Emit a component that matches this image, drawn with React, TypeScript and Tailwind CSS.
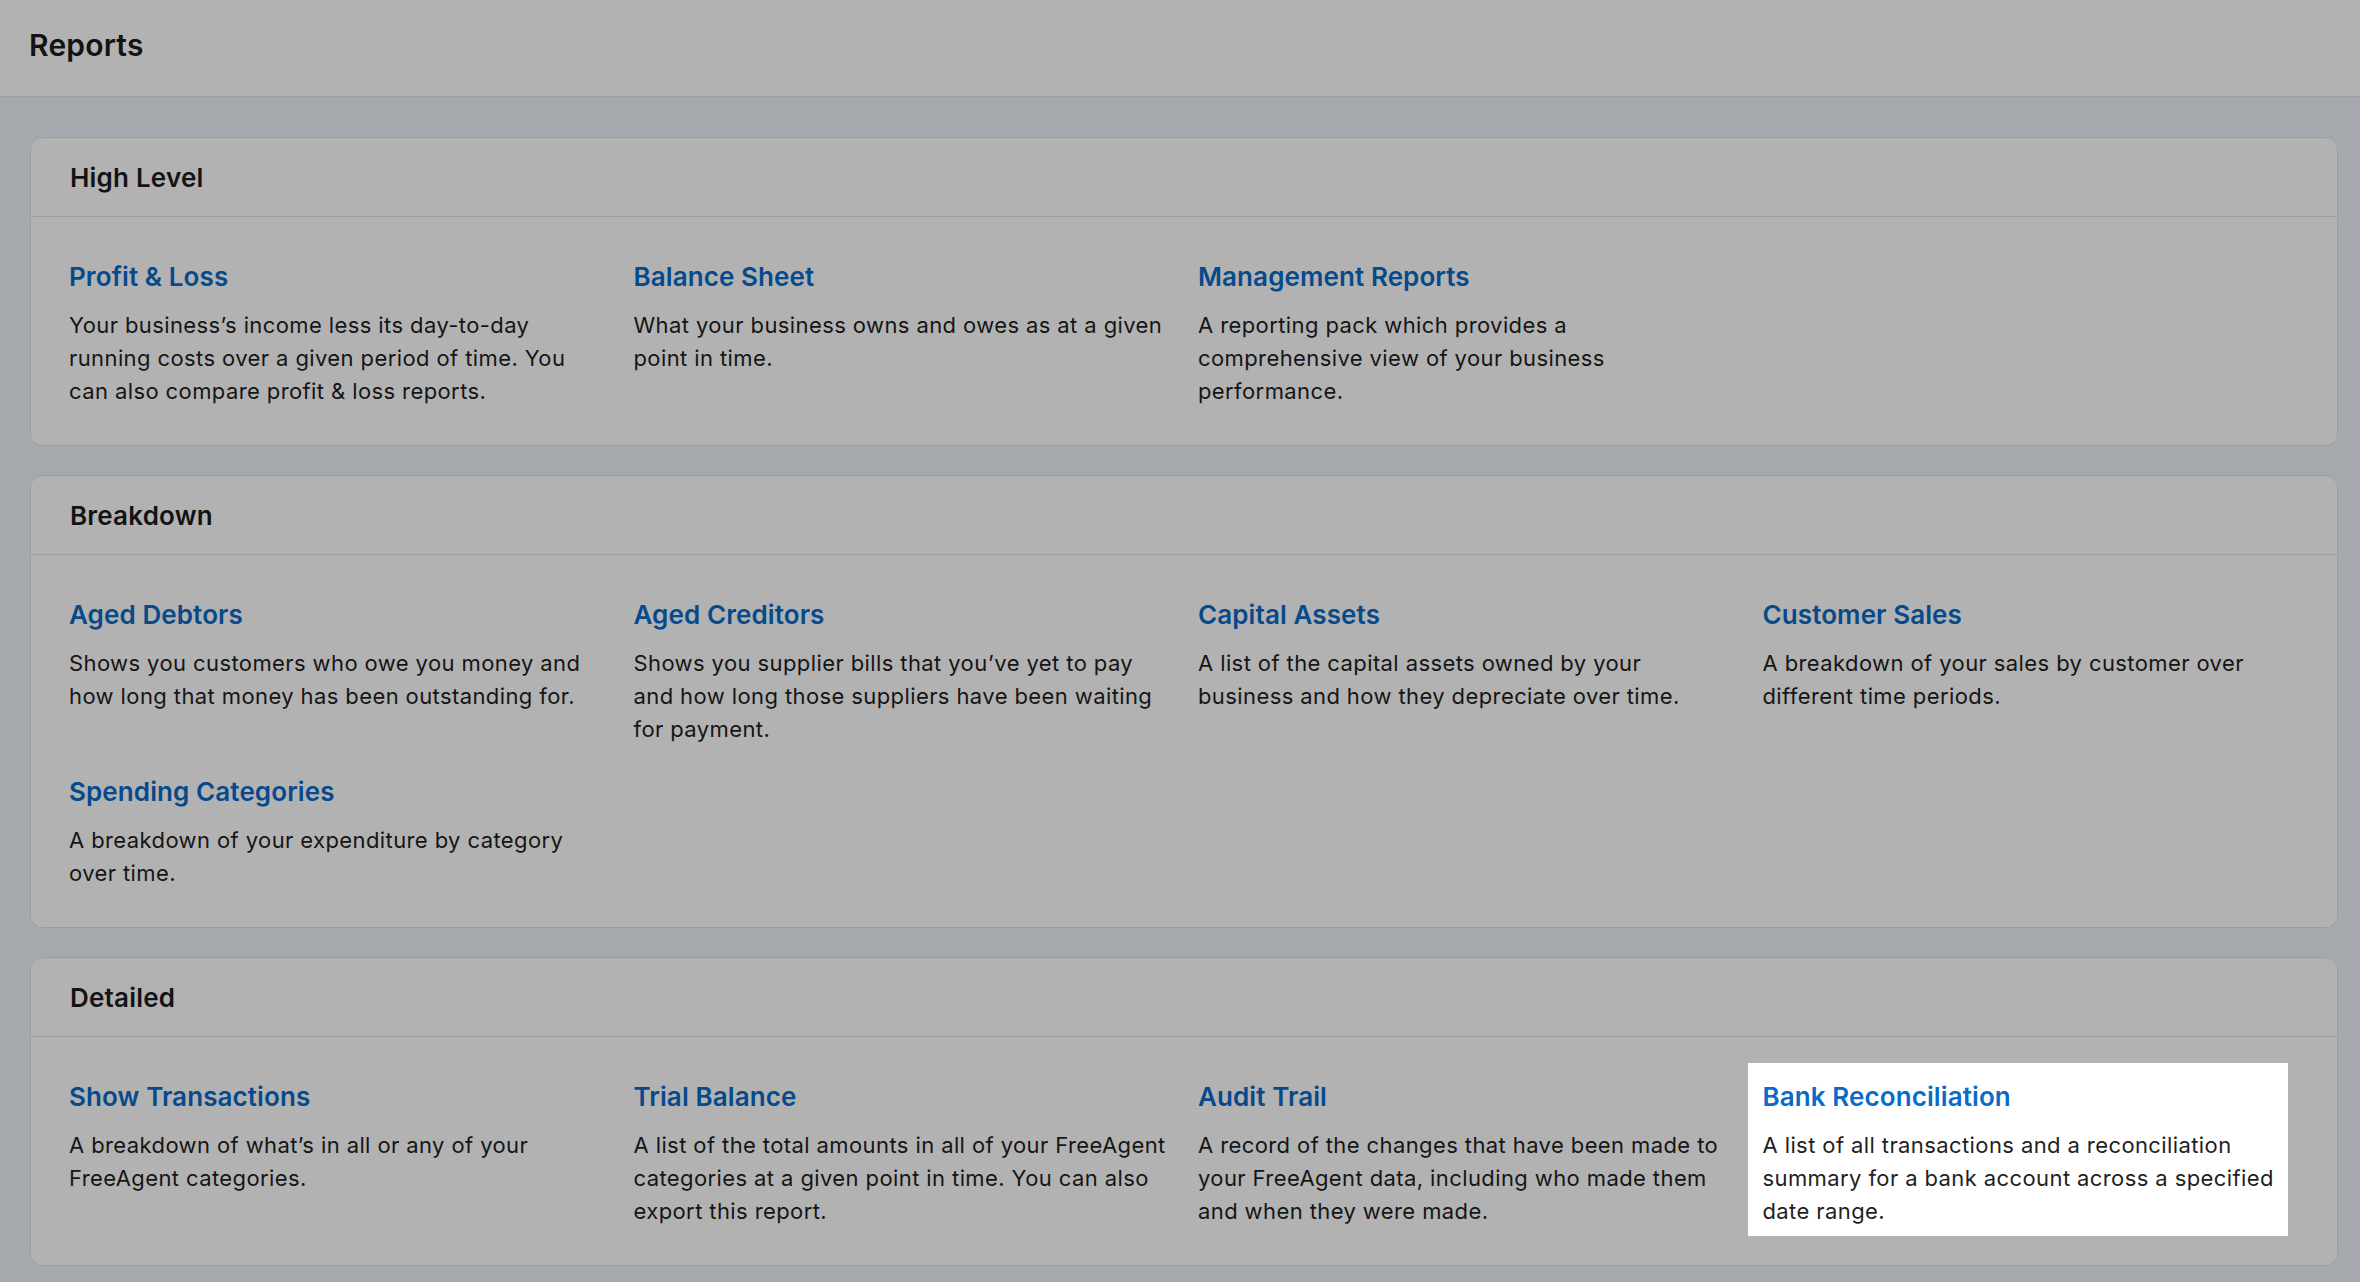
import React from "react";

type Item = { title: string; desc: string; highlight?: boolean };
type Section = { name: string; items: Item[] };

const sections: Section[] = [
  {
    name: "High Level",
    items: [
      {
        title: "Profit & Loss",
        desc: "Your business\u2019s income less its day-to-day running costs over a given period of time. You can also compare profit & loss reports.",
      },
      {
        title: "Balance Sheet",
        desc: "What your business owns and owes as at a given point in time.",
      },
      {
        title: "Management Reports",
        desc: "A reporting pack which provides a comprehensive view of your business performance.",
      },
    ],
  },
  {
    name: "Breakdown",
    items: [
      {
        title: "Aged Debtors",
        desc: "Shows you customers who owe you money and how long that money has been outstanding for.",
      },
      {
        title: "Aged Creditors",
        desc: "Shows you supplier bills that you\u2019ve yet to pay and how long those suppliers have been waiting for payment.",
      },
      {
        title: "Capital Assets",
        desc: "A list of the capital assets owned by your business and how they depreciate over time.",
      },
      {
        title: "Customer Sales",
        desc: "A breakdown of your sales by customer over different time periods.",
      },
      {
        title: "Spending Categories",
        desc: "A breakdown of your expenditure by category over time.",
      },
    ],
  },
  {
    name: "Detailed",
    items: [
      {
        title: "Show Transactions",
        desc: "A breakdown of what\u2019s in all or any of your FreeAgent categories.",
      },
      {
        title: "Trial Balance",
        desc: "A list of the total amounts in all of your FreeAgent categories at a given point in time. You can also export this report.",
      },
      {
        title: "Audit Trail",
        desc: "A record of the changes that have been made to your FreeAgent data, including who made them and when they were made.",
      },
      {
        title: "Bank Reconciliation",
        desc: "A list of all transactions and a reconciliation summary for a bank account across a specified date range.",
        highlight: true,
      },
    ],
  },
];

function ReportItem({ item }: { item: Item }) {
  return (
    <div
      className={
        item.highlight
          ? "relative z-10 w-[540px] bg-white pl-[15px] pt-[17px] pb-[8px] shadow-[0_0_0_9999px_rgba(0,0,0,0.3)]"
          : "w-[540px] pl-[15px] pt-[17px] pb-[8px]"
      }
    >
      <a
        href="#"
        className="block text-[26px] leading-[34px] font-semibold text-[#0a6ac8] tracking-[0.1px]"
      >
        {item.title}
      </a>
      <p className="mt-[15px] mr-[-12px] text-[22px] leading-[33px] tracking-[0.4px] text-[#1f1f1f]">
        {item.desc}
      </p>
    </div>
  );
}

export default function App() {
  return (
    <div className="min-h-screen bg-[#edf1f7] font-['Inter',sans-serif]">
      <header className="flex h-[97px] items-center border-b border-[#e1e4e9] bg-white pb-[5px] pl-[29px]">
        <h1 className="text-[30px] font-semibold tracking-[0.2px] text-[#1c1c1c]">
          Reports
        </h1>
      </header>
      <main className="flex flex-col gap-[29px] pl-[30px] pr-[22px] pt-[40px] pb-[15px]">
        {sections.map((s) => (
          <section
            key={s.name}
            className="rounded-[12px] border border-[#dde1e7] bg-white"
          >
            <div className="flex h-[79px] items-center border-b border-[#e1e4e9] pl-[39px]">
              <h2 className="text-[26px] font-semibold tracking-[0.2px] text-[#1c1c1c]">
                {s.name}
              </h2>
            </div>
            <div className="grid grid-cols-4 gap-y-[4px] pl-[23px] pr-[25px] pt-[26px] pb-[29px]">
              {s.items.map((it) => (
                <ReportItem key={it.title} item={it} />
              ))}
            </div>
          </section>
        ))}
      </main>
    </div>
  );
}
